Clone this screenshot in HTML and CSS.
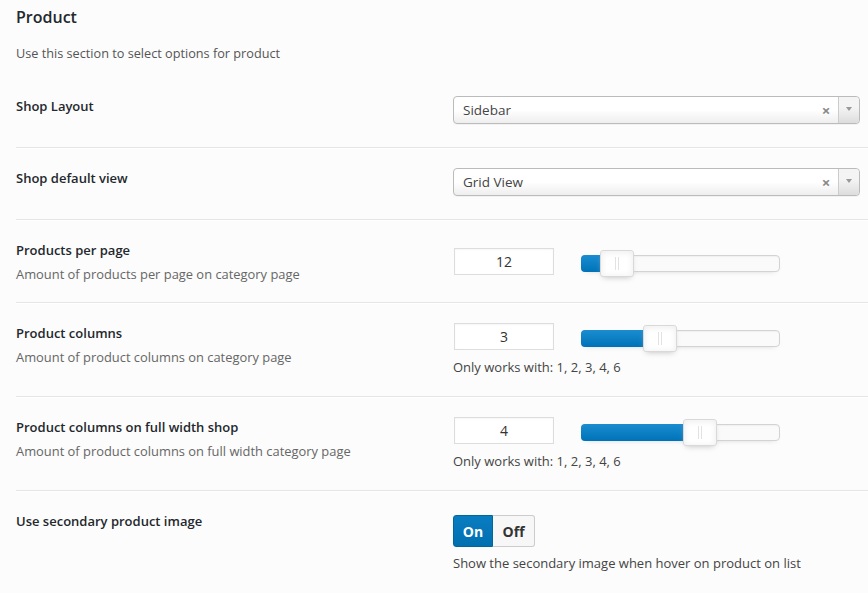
FILE: index.html
```html
<!DOCTYPE html>
<html>
<head>
<meta charset="utf-8">
<link rel="stylesheet" href="styles.css">
</head>
<body>
<div class="panel">
  <h2 class="title">Product</h2>
  <p class="intro">Use this section to select options for product</p>

  <div class="row row-select">
    <div class="label"><div class="name">Shop Layout</div></div>
    <div class="field">
      <div class="select">
        <span class="select-value">Sidebar</span>
        <span class="select-clear">×</span>
        <span class="select-arrow"><span class="tri"></span></span>
      </div>
    </div>
  </div>

  <div class="row row-select">
    <div class="label"><div class="name">Shop default view</div></div>
    <div class="field">
      <div class="select">
        <span class="select-value">Grid View</span>
        <span class="select-clear">×</span>
        <span class="select-arrow"><span class="tri"></span></span>
      </div>
    </div>
  </div>

  <div class="row">
    <div class="label">
      <div class="name">Products per page</div>
      <div class="desc">Amount of products per page on category page</div>
    </div>
    <div class="field">
      <div class="slider-line">
        <div class="num">12</div>
        <div class="track">
          <div class="fill" style="width:17.6%"></div>
          <div class="handle" style="left:17.6%"></div>
        </div>
      </div>
    </div>
  </div>

  <div class="row">
    <div class="label">
      <div class="name">Product columns</div>
      <div class="desc">Amount of product columns on category page</div>
    </div>
    <div class="field">
      <div class="slider-line">
        <div class="num">3</div>
        <div class="track">
          <div class="fill" style="width:39.7%"></div>
          <div class="handle" style="left:39.7%"></div>
        </div>
      </div>
      <div class="note">Only works with: 1, 2, 3, 4, 6</div>
    </div>
  </div>

  <div class="row">
    <div class="label">
      <div class="name">Product columns on full width shop</div>
      <div class="desc">Amount of product columns on full width category page</div>
    </div>
    <div class="field">
      <div class="slider-line">
        <div class="num">4</div>
        <div class="track">
          <div class="fill" style="width:59.8%"></div>
          <div class="handle" style="left:59.8%"></div>
        </div>
      </div>
      <div class="note">Only works with: 1, 2, 3, 4, 6</div>
    </div>
  </div>

  <div class="row row-toggle">
    <div class="label"><div class="name">Use secondary product image</div></div>
    <div class="field">
      <div class="toggle">
        <span class="opt on">On</span>
        <span class="opt off">Off</span>
      </div>
      <div class="note">Show the secondary image when hover on product on list</div>
    </div>
  </div>
</div>
</body>
</html>
```

FILE: styles.css
```css
* { box-sizing: border-box; }

html, body {
  margin: 0;
  padding: 0;
  background: #fcfcfc;
}

body {
  font-family: "Open Sans", "Noto Sans", sans-serif;
  color: #23282d;
  font-size: 13px;
}

.panel {
  padding-left: 16px;
}

.title {
  margin: 6px 0 0;
  font-size: 16px;
  line-height: 22px;
  font-weight: 600;
  color: #23282d;
}

.intro {
  margin: 16px 0 14px;
  font-size: 12.7px;
  line-height: 18px;
  color: #555;
}

.row {
  display: grid;
  grid-template-columns: 437px 1fr;
  align-items: start;
  border-bottom: 1px solid #e5e5e5;
  box-shadow: 0 1px 0 #fff;
}

.label {
  padding: 20px 10px 19px 0;
}

.name {
  font-size: 13px;
  line-height: 20px;
  font-weight: 600;
  color: #23282d;
}

.desc {
  margin-top: 5px;
  font-size: 12.9px;
  line-height: 18px;
  color: #666;
}

.field {
  align-self: center;
  padding: 20px 8px 20px 0;
}

.row-select .field {
  align-self: start;
  padding: 20px 8px 23px 0;
}

.row-toggle {
  border-bottom: 0;
  box-shadow: none;
}

.row-toggle .field {
  align-self: start;
  padding: 24px 8px 30px 0;
}

/* select2-like dropdown */
.select {
  position: relative;
  display: flex;
  align-items: center;
  height: 28px;
  border: 1px solid #bbb;
  border-radius: 4px;
  background: linear-gradient(to top, #eee 0%, #fff 50%);
  box-shadow: 0 1px 0 rgba(0,0,0,0.04);
}

.select-value {
  flex: 1;
  padding-left: 9px;
  font-size: 13.5px;
  line-height: 26px;
  color: #444;
}

.select-clear {
  width: 18px;
  margin-right: 3px;
  text-align: center;
  font-size: 15px;
  font-weight: 700;
  color: #888;
  line-height: 26px;
}

.select-arrow {
  align-self: stretch;
  width: 21px;
  display: flex;
  align-items: center;
  justify-content: center;
  border-left: 1px solid #ccc;
  border-radius: 0 4px 4px 0;
  background: linear-gradient(to top, #ddd 0%, #f4f4f4 60%);
}

.tri {
  width: 0;
  height: 0;
  border-left: 3px solid transparent;
  border-right: 3px solid transparent;
  border-top: 4px solid #999;
  margin-top: -2px;
}

/* slider */
.slider-line {
  display: flex;
  align-items: flex-start;
}

.num {
  width: 100px;
  height: 27px;
  margin-left: 1px;
  border: 1px solid #ddd;
  background: #fff;
  text-align: center;
  font-size: 14px;
  line-height: 25px;
  color: #333;
  box-shadow: inset 0 1px 2px rgba(0,0,0,0.04);
}

.track {
  position: relative;
  margin-left: 27px;
  margin-top: 7px;
  width: 199px;
  height: 17px;
  border: 1px solid #d3d3d3;
  border-radius: 4px;
  background: #fafafa;
  box-shadow: inset 0 1px 1px #f0f0f0, 0 3px 6px -5px #bbb;
}

.fill {
  position: absolute;
  left: -1px;
  top: -1px;
  bottom: -1px;
  border-radius: 4px 0 0 4px;
  background: linear-gradient(to bottom, #1a8cd0, #0073b8);
}

.handle {
  position: absolute;
  top: -6px;
  width: 34px;
  height: 27px;
  margin-left: -17px;
  border: 1px solid #d9d9d9;
  border-radius: 3px;
  background: #fff;
  box-shadow: inset 0 0 1px #fff, inset 0 1px 7px #ebebeb, 0 3px 6px -3px #bbb;
}

.handle::before,
.handle::after {
  content: "";
  position: absolute;
  top: 6px;
  height: 13px;
  width: 1px;
  background: #e2e2e2;
}

.handle::before { left: 14px; }
.handle::after { left: 17px; }

.note {
  margin-top: 8px;
  font-size: 13px;
  line-height: 18px;
  color: #444;
}

/* on/off switch */
.toggle {
  display: inline-flex;
  height: 32px;
  border-radius: 3px;
}

.opt {
  display: flex;
  align-items: center;
  justify-content: center;
  font-size: 14px;
  font-weight: 700;
}

.opt.on {
  width: 40px;
  color: #fff;
  background: linear-gradient(to bottom, #0a7cc1, #0070b0);
  border: 1px solid #006799;
  border-radius: 3px 0 0 3px;
}

.opt.off {
  width: 42px;
  color: #333;
  background: #f7f7f7;
  border: 1px solid #ccc;
  border-left: 0;
  border-radius: 0 3px 3px 0;
}

.row-toggle .note {
  margin-top: 7px;
}
```
